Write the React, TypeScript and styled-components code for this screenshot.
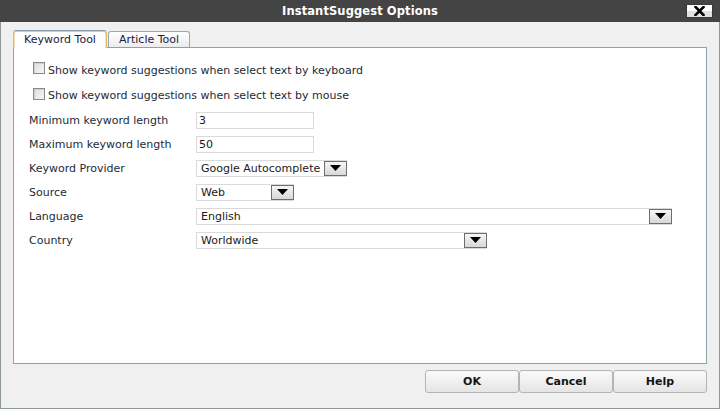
import React from "react";
import styled, { createGlobalStyle } from "styled-components";

const Global = createGlobalStyle`
  html, body { margin: 0; padding: 0; background: #f0f0f0; }
  body { font-family: "DejaVu Sans", Verdana, sans-serif; font-size: 11px; color: #1e2a33; }
  * { box-sizing: border-box; }
`;

const Window = styled.div`
  width: 720px;
  height: 409px;
  display: flex;
  flex-direction: column;
  background: #f0f0f0;
  border: 1px solid #8e9898;
  border-top: none;
`;

const TitleBar = styled.div`
  height: 22px;
  margin: 0 -1px;
  background: #444444;
  display: grid;
  grid-template-columns: 1fr auto 1fr;
  align-items: center;
`;

const Title = styled.div`
  grid-column: 2;
  color: #ffffff;
  font-weight: bold;
  font-size: 11.5px;
  letter-spacing: 0.1px;
`;

const CloseButton = styled.div`
  grid-column: 3;
  justify-self: end;
  margin-right: 7px;
  width: 27px;
  height: 14px;
  border: 1px solid #3a3a3a;
  border-radius: 1px;
  background: linear-gradient(#ffffff 0%, #ffffff 50%, #e2e2dc 50%, #e2e2dc 100%);
  display: flex;
  align-items: center;
  justify-content: center;
`;

const Body = styled.div`
  flex: 1;
  display: flex;
  flex-direction: column;
  padding: 9px 12px 15px 12px;
`;

const TabStrip = styled.div`
  display: flex;
  align-items: flex-end;
  gap: 1px;
  height: 17px;
  position: relative;
  z-index: 1;
  margin-bottom: -1px;
`;

const Tab = styled.div<{ $active?: boolean }>`
  height: ${(p) => (p.$active ? "18px" : "17px")};
  padding: 0 9px;
  display: flex;
  align-items: center;
  justify-content: center;
  color: #1e1a40;
  font-size: 11px;
  border-radius: 3px 3px 0 0;
  ${(p) =>
    p.$active
      ? `
    width: 94px;
    background: #ffffff;
    border: 1px solid #e8b860;
    border-top: 1px solid #8c9ca8;
    border-bottom: none;
    box-shadow: inset 0 1px 0 #f0c878, inset 1px 0 0 #f8e0b0, inset -1px 0 0 #f8e0b0;
  `
      : `
    width: 82px;
    background: linear-gradient(#ffffff, #ececec);
    border: 1px solid #9aaab4;
    border-bottom: 1px solid #8fa0aa;
  `}
`;

const Panel = styled.div`
  flex: 1;
  background: #ffffff;
  border: 1px solid #8fa0a8;
  padding: 9px 0 0 15px;
  display: flex;
  flex-direction: column;
`;

const CheckRow = styled.label<{ $h: number }>`
  height: ${(p) => p.$h}px;
  display: flex;
  align-items: center;
  padding-left: 4px;
  gap: 3px;
`;

const CheckBox = styled.span`
  width: 12px;
  height: 12px;
  margin-top: -4px;
  border: 1px solid #8a8a8a;
  background: linear-gradient(135deg, #dcdcdc, #f6f6f6);
  box-shadow: inset 1px 1px 0 #cfcfcf;
`;

const CheckText = styled.span`
  color: #1e2a33;
`;

const Form = styled.div`
  display: grid;
  grid-template-columns: 167px 1fr;
  grid-auto-rows: 24px;
  align-items: center;
`;

const Label = styled.div`
  color: #1c2c3a;
`;

const TextInput = styled.div`
  width: 118px;
  height: 17px;
  border: 1px solid #dadada;
  padding-left: 2px;
  display: flex;
  align-items: center;
  color: #1a1a1a;
`;

const SelectBox = styled.div<{ $w: number }>`
  width: ${(p) => p.$w}px;
  height: 17px;
  border: 1px solid #dadada;
  padding-left: 4px;
  display: flex;
  align-items: flex-end;
  justify-content: space-between;
  color: #1a1a1a;
`;

const SelectText = styled.span`
  align-self: center;
`;

const ArrowButton = styled.span`
  width: 23px;
  height: 15px;
  margin-right: -1px;
  border: 1px solid #6e6e6e;
  background: linear-gradient(#f6f6f6, #d8d8d8);
  display: flex;
  align-items: center;
  justify-content: center;
`;

const ButtonRow = styled.div`
  display: flex;
  justify-content: flex-end;
  padding-top: 6px;
`;

const Button = styled.div`
  width: 94px;
  height: 23px;
  border: 1px solid #b4b4b4;
  border-radius: 3px;
  background: linear-gradient(#fafafa 0%, #f0f0f0 50%, #e4e4e4 100%);
  display: flex;
  align-items: center;
  justify-content: center;
  font-weight: bold;
  font-size: 11px;
  color: #151515;
`;

const Arrow = () => (
  <svg width="11" height="6" viewBox="0 0 11 6">
    <polygon points="0,0 11,0 5.5,6" fill="#000" />
  </svg>
);

const CloseIcon = () => (
  <svg width="11" height="10" viewBox="0 0 11 10">
    <path d="M1.5 1 L9.5 9 M9.5 1 L1.5 9" stroke="#000" strokeWidth="2.6" strokeLinecap="square" />
  </svg>
);

const Select = ({ w, value }: { w: number; value: string }) => (
  <SelectBox $w={w}>
    <SelectText>{value}</SelectText>
    <ArrowButton>
      <Arrow />
    </ArrowButton>
  </SelectBox>
);

export default function App() {
  return (
    <>
      <Global />
      <Window>
        <TitleBar>
          <Title>InstantSuggest Options</Title>
          <CloseButton>
            <CloseIcon />
          </CloseButton>
        </TitleBar>
        <Body>
          <TabStrip>
            <Tab $active>Keyword Tool</Tab>
            <Tab>Article Tool</Tab>
          </TabStrip>
          <Panel>
            <CheckRow $h={26}>
              <CheckBox />
              <CheckText>Show keyword suggestions when select text by keyboard</CheckText>
            </CheckRow>
            <CheckRow $h={25}>
              <CheckBox />
              <CheckText>Show keyword suggestions when select text by mouse</CheckText>
            </CheckRow>
            <Form>
              <Label>Minimum keyword length</Label>
              <TextInput>3</TextInput>
              <Label>Maximum keyword length</Label>
              <TextInput>50</TextInput>
              <Label>Keyword Provider</Label>
              <Select w={151} value="Google Autocomplete" />
              <Label>Source</Label>
              <Select w={98} value="Web" />
              <Label>Language</Label>
              <Select w={476} value="English" />
              <Label>Country</Label>
              <Select w={291} value="Worldwide" />
            </Form>
          </Panel>
          <ButtonRow>
            <Button>OK</Button>
            <Button>Cancel</Button>
            <Button>Help</Button>
          </ButtonRow>
        </Body>
      </Window>
    </>
  );
}
